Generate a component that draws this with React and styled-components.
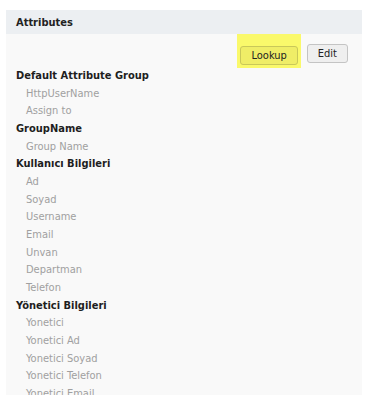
import React from "react";
import styled, { createGlobalStyle } from "styled-components";

const Global = createGlobalStyle`
  html, body { margin: 0; padding: 0; background: #ffffff; overflow: hidden; }
  body { font-family: "DejaVu Sans Condensed", "DejaVu Sans", sans-serif; font-stretch: condensed; }
`;

const Page = styled.div`
  padding: 10px 5px 0 6px;
  height: 395px;
  box-sizing: border-box;
  overflow: hidden;
`;

const Panel = styled.section`
  width: 356px;
  background: #f9f9f9;
`;

const Header = styled.div`
  height: 24px;
  background: #eceff2;
  padding-left: 10px;
  padding-top: 1px;
  box-sizing: border-box;
  display: flex;
  align-items: center;
  font-size: 11px;
  font-weight: bold;
  color: #222;
`;

const Toolbar = styled.div`
  height: 34px;
  display: flex;
  justify-content: flex-end;
  align-items: flex-start;
  gap: 6px;
  padding-right: 14px;
`;

const Highlight = styled.div`
  height: 34px;
  box-sizing: border-box;
  padding: 10px 3px 0;
  background: ${(p) => (p.$on ? "#faf96b" : "transparent")};
`;

const Button = styled.button`
  height: 19px;
  box-sizing: border-box;
  padding: 0 ${(p) => p.$px}px;
  border: 1px solid ${(p) => (p.$hl ? "#c9c85a" : "#c4c4c4")};
  border-radius: 3px;
  background: ${(p) => (p.$hl ? "#efed67" : "#efefef")};
  font-family: inherit;
  font-stretch: condensed;
  font-size: 11px;
  color: #222;
  line-height: 17px;
  margin-top: ${(p) => (p.$hl ? 0 : 10)}px;
`;

const List = styled.div`
  padding-left: 10px;
  margin-top: -1px;
`;

const GroupTitle = styled.div`
  height: 17.67px;
  line-height: 17.67px;
  font-size: 11px;
  font-weight: bold;
  color: #1e1e1e;
  white-space: nowrap;
`;

const Item = styled.div`
  height: 17.67px;
  line-height: 17.67px;
  padding-left: 10px;
  font-size: 11px;
  color: #a0a0a0;
  white-space: nowrap;
`;

const groups = [
  { title: "Default Attribute Group", items: ["HttpUserName", "Assign to"] },
  { title: "GroupName", items: ["Group Name"] },
  {
    title: "Kullanıcı Bilgileri",
    items: ["Ad", "Soyad", "Username", "Email", "Unvan", "Departman", "Telefon"],
  },
  {
    title: "Yönetici Bilgileri",
    items: ["Yonetici", "Yonetici Ad", "Yonetici Soyad", "Yonetici Telefon", "Yonetici Email"],
  },
];

export default function App() {
  return (
    <>
      <Global />
      <Page>
        <Panel>
          <Header>Attributes</Header>
          <Toolbar>
            <Highlight $on>
              <Button $hl $px={10}>Lookup</Button>
            </Highlight>
            <Button $px={10}>Edit</Button>
          </Toolbar>
          <List>
            {groups.map((g) => (
              <React.Fragment key={g.title}>
                <GroupTitle>{g.title}</GroupTitle>
                {g.items.map((i) => (
                  <Item key={i}>{i}</Item>
                ))}
              </React.Fragment>
            ))}
          </List>
        </Panel>
      </Page>
    </>
  );
}
